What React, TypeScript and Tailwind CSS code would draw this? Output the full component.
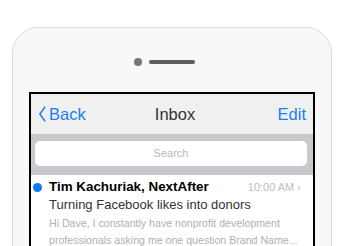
export default function App() {
  return (
    <div className="w-[340px] h-[246px] overflow-hidden bg-white pt-[27px] pl-[12px]" style={{ fontFamily: '"Liberation Sans", Arial, sans-serif' }}>
      <div className="w-[320px] h-[300px] rounded-t-[26px] border border-[#dcdcdc] bg-[#f8f8f8]">
        <div className="flex items-center justify-center gap-[7px] pt-[30px]">
          <div className="w-[8px] h-[8px] rounded-full bg-[#777]" />
          <div className="w-[46px] h-[4px] rounded-full bg-[#5c5c5c]" />
          <div className="w-[8px] h-[8px]" />
        </div>
        <div className="mx-[16px] mt-[26px] border-2 border-black bg-white">
          <div className="h-[40px] bg-[#f0f0f0] flex items-center justify-between px-[7px] relative">
            <div className="flex items-center text-[#1b7cf8] text-[16.5px]">
              <svg width="9" height="16" viewBox="0 0 9 16" className="mr-[2px]">
                <path d="M6.8 1.2 L1.8 8 L6.8 14.8" fill="none" stroke="#1b7cf8" strokeWidth="1.5" strokeLinecap="round" strokeLinejoin="round" />
              </svg>
              <span>Back</span>
            </div>
            <div className="absolute left-0 right-0 pl-[6px] text-center text-[16.5px] text-[#333] pointer-events-none">Inbox</div>
            <div className="text-[#1b7cf8] text-[16.5px]">Edit</div>
          </div>
          <div className="h-[41px] bg-[#c9c8cd] pt-[7px] pl-[4px] pr-[6px]">
            <div className="h-[25px] rounded-[5px] bg-white flex items-center justify-center text-[11px] text-[#b8b8b8]">Search</div>
          </div>
          <div className="flex pt-[3px]">
            <div className="pl-[2px] pt-[5px]">
              <div className="w-[9px] h-[9px] rounded-full bg-[#0b7cf5]" />
            </div>
            <div className="flex-1 pl-[7px] pr-[12px] min-w-0">
              <div className="flex justify-between items-center h-[18px]">
                <span className="text-[13.4px] font-bold text-black">Tim Kachuriak, NextAfter</span>
                <span className="text-[11px] text-[#bdbdbd]">10:00 AM ›</span>
              </div>
              <div className="text-[13px] text-[#333] leading-[18px]">Turning Facebook likes into donors</div>
              <div className="text-[10.6px] text-[#b0b0b0] leading-[17px] pt-[1px] -mr-[8px]">
                Hi Dave, I constantly have nonprofit development professionals asking me one question Brand Name...
              </div>
            </div>
          </div>
        </div>
      </div>
    </div>
  );
}
